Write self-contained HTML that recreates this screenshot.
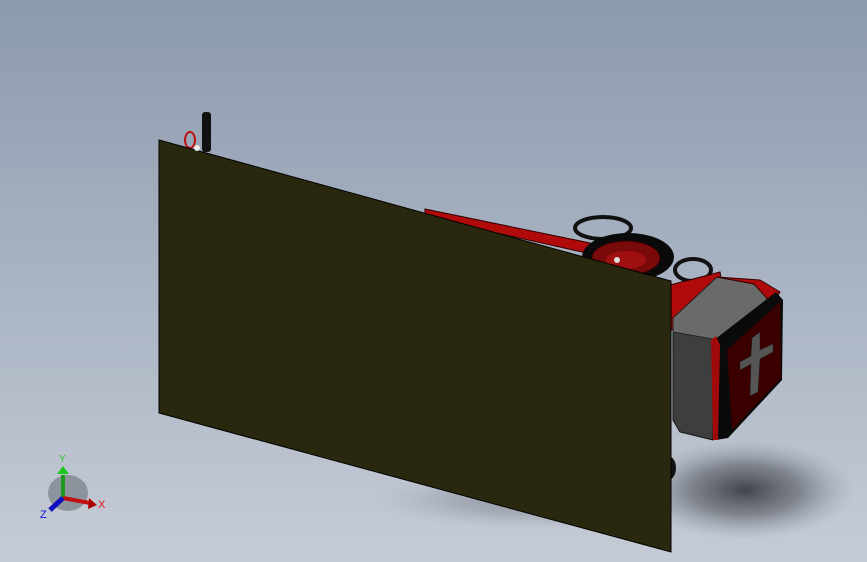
<!DOCTYPE html>
<html><head><style>html,body{margin:0;padding:0;width:867px;height:562px;overflow:hidden}</style></head>
<body>
<svg width="867" height="562" viewBox="0 0 867 562" xmlns="http://www.w3.org/2000/svg" style="display:block">
<defs>
<linearGradient id="bg" x1="0" y1="0" x2="0" y2="1">
<stop offset="0" stop-color="#8c9aae"/><stop offset="1" stop-color="#c6ccd6"/></linearGradient>
<radialGradient id="sh" cx="0.5" cy="0.5" r="0.5">
<stop offset="0" stop-color="#2a2d33" stop-opacity="0.85"/><stop offset="0.5" stop-color="#4a4e56" stop-opacity="0.55"/><stop offset="1" stop-color="#8a909a" stop-opacity="0"/></radialGradient>
</defs>
<rect width="867" height="562" fill="url(#bg)"/>
<ellipse cx="745" cy="490" rx="110" ry="50" fill="url(#sh)"/>
<ellipse cx="540" cy="500" rx="170" ry="30" fill="url(#sh)" opacity="0.4"/>
<rect x="202" y="112" width="9" height="40" rx="3" fill="#111"/>
<ellipse cx="190" cy="140" rx="5" ry="8" fill="none" stroke="#c01010" stroke-width="2"/>
<polygon points="425,209 590,243 600,256 425,217" fill="#b00a0a" stroke="#300" stroke-width="1"/>
<ellipse cx="603" cy="228" rx="28" ry="11" fill="none" stroke="#111" stroke-width="4"/>
<ellipse cx="693" cy="270" rx="18" ry="11" fill="none" stroke="#111" stroke-width="4"/>
<ellipse cx="628" cy="257" rx="46" ry="24" fill="#0a0a0a"/>
<ellipse cx="626" cy="258" rx="34" ry="17" fill="#7a0a0a" stroke="#300"/>
<ellipse cx="626" cy="260" rx="20" ry="9" fill="#a01010"/>
<circle cx="617" cy="260" r="3" fill="#ddd"/>
<polygon points="670,285 720,272 725,300 690,330 670,330" fill="#b00a0a" stroke="#200"/>
<ellipse cx="668" cy="468" rx="8" ry="12" fill="#111"/>
<polygon points="673,328 714,330 713,440 680,432 673,420" fill="#3e3e3e" stroke="#111"/>
<polygon points="673,318 717,277 754,284 770,300 718,340 673,332" fill="#6a6a6a" stroke="#222"/>
<polygon points="717,277 760,280 780,292 772,304 754,284" fill="#b00a0a" stroke="#300"/>
<polygon points="714,340 776,292 783,300 782,380 728,438 716,440 712,350" fill="#0a0a0a"/>
<polygon points="727,350 780,302 781,378 732,430" fill="#3a0000"/>
<polygon points="752,338 760,332 760,350 773,344 773,352 760,359 758,392 750,396 751,364 740,370 740,362 751,356" fill="#555" stroke="#222" stroke-width="0.5"/>
<polygon points="711,340 716,336 720,345 718,440 713,440" fill="#a00a0a"/>
<polygon points="159,140 671,281 671,552 159,413" fill="#29280f" stroke="#000" stroke-width="1"/>
<circle cx="197" cy="148" r="3" fill="#eee"/>
<ellipse cx="68" cy="493" rx="20" ry="18" fill="#6d7178" opacity="0.6"/>
<line x1="63" y1="498" x2="63" y2="475" stroke="#1a9a1a" stroke-width="4"/>
<polygon points="57,474 69,474 63,466" fill="#1ec81e"/>
<line x1="63" y1="498" x2="90" y2="503" stroke="#c01010" stroke-width="4"/>
<polygon points="89,498 97,505 88,509" fill="#a00"/>
<line x1="63" y1="498" x2="50" y2="510" stroke="#1010c0" stroke-width="5"/>
<text x="59" y="462" font-family="Liberation Sans, sans-serif" font-size="10" fill="#1ec81e">Y</text>
<text x="98" y="508" font-family="Liberation Sans, sans-serif" font-size="11" fill="#e01010">X</text>
<text x="40" y="518" font-family="Liberation Sans, sans-serif" font-size="11" fill="#1010e0">Z</text>
</svg>
</body></html>
